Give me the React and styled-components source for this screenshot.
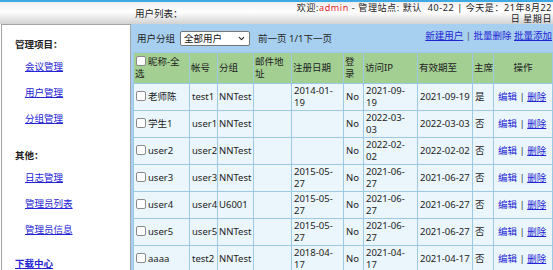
import React from 'react'
import styled, { createGlobalStyle } from 'styled-components'
import { ChevronDown } from 'lucide-react'

const GlobalStyle = createGlobalStyle`
  html, body { margin: 0; padding: 0; background: #fff; }
  body {
    font-family: "Noto Sans", "Noto Sans CJK SC", sans-serif;
    font-size: 9.5px;
    color: #222;
  }
`

const Page = styled.div`
  width: 553px;
  height: 270px;
  overflow: hidden;
  border-top: 2px solid #3fa9e1;
  box-sizing: border-box;
  display: grid;
  grid-template-rows: 22px 1fr;
`

const TopBar = styled.div`
  display: grid;
  grid-template-columns: 135px 1fr auto;
  align-items: center;
  background: linear-gradient(#efefef, #ffffff 45%, #d2d2d2);
`

const PageTitle = styled.div`
  grid-column: 2;
`

const Welcome = styled.div`
  text-align: right;
  font-size: 9px;
  line-height: 11px;
  padding-right: 2px;
  letter-spacing: 0.6px;
`

const Red = styled.span`
  color: #e3262b;
`

const Main = styled.div`
  display: grid;
  grid-template-columns: 131px 1fr;
  min-height: 0;
`

const Sidebar = styled.div`
  margin-left: 1px;
  border: 1px solid #a3a3a3;
  border-bottom: none;
  background: #fff;
  padding: 14px 0 0 13px;
  display: flex;
  flex-direction: column;
`

const GroupTitle = styled.div`
  font-weight: bold;
  line-height: 12px;
  margin-top: ${p => p.first ? 0 : 25}px;
`

const SubList = styled.div`
  padding-left: 10px;
  margin-top: 10px;
  display: flex;
  flex-direction: column;
  gap: 14px;
`

const NavLink = styled.a`
  color: #2424d4;
  text-decoration: underline;
  line-height: 12px;
  font-weight: ${p => p.bold ? 'bold' : 'normal'};
  margin-top: ${p => p.gap || 0}px;
`

const Content = styled.div`
  background: #a7d0f0;
  padding: 0 1px 0 2px;
  display: flex;
  flex-direction: column;
`

const Toolbar = styled.div`
  height: 28px;
  display: flex;
  align-items: center;
  padding-left: 4px;
`

const Label = styled.span`
  margin-right: 5px;
`

const SelectWrap = styled.div`
  position: relative;
  width: 70px;
  height: 15px;
  margin-right: 8px;
`

const Select = styled.select`
  appearance: none;
  width: 100%;
  height: 100%;
  box-sizing: border-box;
  border: 1px solid #767676;
  border-radius: 2px;
  background: #fff;
  font: inherit;
  color: #111;
  padding: 0 0 0 3px;
`

const Chevron = styled(ChevronDown)`
  position: absolute;
  right: 4px;
  top: 3px;
  pointer-events: none;
`

const Pager = styled.span``

const Actions = styled.div`
  margin-left: auto;
  align-self: flex-start;
  margin-top: 4px;
  padding-right: 1px;
  color: #555;
`

const ActLink = styled.a`
  color: #2424d4;
  text-decoration: ${p => p.plain ? 'none' : 'underline'};
`

const Table = styled.table`
  border-collapse: collapse;
  table-layout: fixed;
  width: 419px;
  background: #eaf6fc;
`

const Th = styled.th`
  background: #a3cf92;
  font-weight: normal;
  text-align: ${p => p.center ? 'center' : 'left'};
  white-space: ${p => p.nowrap ? 'nowrap' : 'normal'};
  vertical-align: middle;
  height: 30px;
  line-height: 12px;
  padding: 0 1px;
  border: 1px solid #9cc9e4;
`

const Td = styled.td`
  height: 26px;
  line-height: 12px;
  padding: 0 1px 0 2px;
  vertical-align: middle;
  border: 1px solid #9cc9e4;
  white-space: nowrap;
  padding-left: ${p => p.pl || 2}px;
`

const Check = styled.input.attrs({ type: 'checkbox' })`
  appearance: none;
  width: 10px;
  height: 10px;
  margin: 0 2px 0 1px;
  border: 1px solid #8a8a8a;
  border-radius: 2px;
  background: #fff;
  vertical-align: -1px;
`

const Sep = styled.span`
  color: #333;
`

const cols = [56, 28, 36, 38, 52, 20, 54, 55, 21, 59]

const rows = [
  ['老师陈', 'test1', 'NNTest', '2014-01-19', '2021-09-19', '2021-09-19', '是'],
  ['学生1', 'user1', 'NNTest', '', '2022-03-03', '2022-03-03', '否'],
  ['user2', 'user2', 'NNTest', '', '2022-02-02', '2022-02-02', '否'],
  ['user3', 'user3', 'NNTest', '2015-05-27', '2021-06-27', '2021-06-27', '否'],
  ['user4', 'user4', 'U6001', '2015-05-27', '2021-06-27', '2021-06-27', '否'],
  ['user5', 'user5', 'NNTest', '2015-05-27', '2021-06-27', '2021-06-27', '否'],
  ['aaaa', 'test2', 'NNTest', '2018-04-17', '2021-04-17', '2021-04-17', '否'],
]

// dates in the narrow columns break after the second hyphen
const Split = ({ d }) => d ? <>{d.slice(0, 8)}<br />{d.slice(8)}</> : null

export default function App() {
  return (
    <>
      <GlobalStyle />
      <Page>
        <TopBar>
          <PageTitle>用户列表：</PageTitle>
          <Welcome>
            欢迎:<Red>admin</Red> - 管理站点: 默认&nbsp; 40-22 | 今天是：21年8月22<br />日 星期日
          </Welcome>
        </TopBar>
        <Main>
          <Sidebar>
            <GroupTitle first>管理项目：</GroupTitle>
            <SubList>
              <NavLink href="#">会议管理</NavLink>
              <NavLink href="#">用户管理</NavLink>
              <NavLink href="#">分组管理</NavLink>
            </SubList>
            <GroupTitle>其他：</GroupTitle>
            <SubList>
              <NavLink href="#">日志管理</NavLink>
              <NavLink href="#">管理员列表</NavLink>
              <NavLink href="#">管理员信息</NavLink>
            </SubList>
            <NavLink href="#" bold gap={22}>下载中心</NavLink>
          </Sidebar>
          <Content>
            <Toolbar>
              <Label>用户分组</Label>
              <SelectWrap>
                <Select defaultValue="all">
                  <option value="all">全部用户</option>
                </Select>
                <Chevron size={9} strokeWidth={3} color="#222" />
              </SelectWrap>
              <Pager>前一页 1/1下一页</Pager>
              <Actions>
                <ActLink href="#">新建用户</ActLink> | <ActLink href="#" plain>批量删除</ActLink> <ActLink href="#">批量添加</ActLink>
              </Actions>
            </Toolbar>
            <Table>
              <colgroup>
                {cols.map((w, i) => <col key={i} style={{ width: w }} />)}
              </colgroup>
              <thead>
                <tr>
                  <Th><Check />昵称-全选</Th>
                  <Th>帐号</Th>
                  <Th>分组</Th>
                  <Th>邮件地址</Th>
                  <Th>注册日期</Th>
                  <Th>登录</Th>
                  <Th>访问IP</Th>
                  <Th>有效期至</Th>
                  <Th nowrap>主席</Th>
                  <Th center>操作</Th>
                </tr>
              </thead>
              <tbody>
                {rows.map((r, i) => (
                  <tr key={i}>
                    <Td pl={1}><Check />{r[0]}</Td>
                    <Td>{r[1]}</Td>
                    <Td pl={1}>{r[2]}</Td>
                    <Td />
                    <Td><Split d={r[3]} /></Td>
                    <Td>No</Td>
                    <Td><Split d={r[4]} /></Td>
                    <Td>{r[5]}</Td>
                    <Td>{r[6]}</Td>
                    <Td pl={4}>
                      <ActLink href="#" plain>编辑</ActLink> <Sep>|</Sep> <ActLink href="#">删除</ActLink>
                    </Td>
                  </tr>
                ))}
              </tbody>
            </Table>
          </Content>
        </Main>
      </Page>
    </>
  )
}
